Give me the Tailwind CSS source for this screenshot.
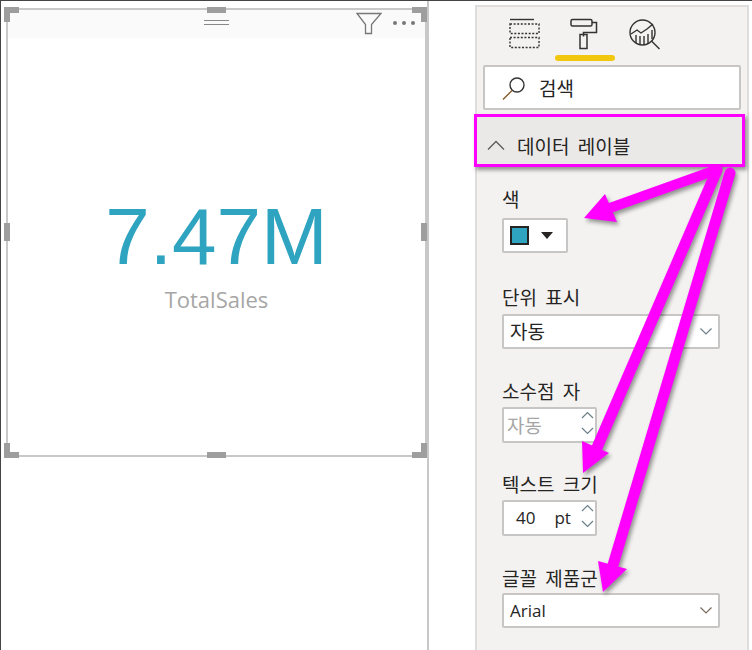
<!DOCTYPE html>
<html lang="ko">
<head>
    <meta charset="UTF-8">
    <script src="https://cdn.jsdelivr.net/npm/@tailwindcss/browser@4"></script>
    <title>Power BI card format</title>
</head>
<body class="bg-white">
    <div class="relative flex w-[752px] h-[650px] overflow-hidden border-t border-t-[#444] font-['Noto_Sans_CJK_KR',sans-serif] text-[#252423]">
        <!-- report canvas -->
        <div class="w-[429px] h-full border-l border-l-[#444] border-r-2 border-r-[#c8c8c8] pt-[7px] pl-[5px]">
            <div class="relative w-[421px] h-[449px] border-2 border-[#c8c8c8]">
                <div class="relative h-[28px] bg-[#fafafa]">
                    <div class="absolute left-[196px] top-[10px] w-[25px] h-[5px] border-y border-[#888]"></div>
                    <svg class="absolute left-[348px] top-[2px]" width="26" height="23" viewBox="0 0 26 23" fill="none" stroke="#777" stroke-width="1.3"><path d="M1 1.5h24l-9.5 11v9h-6v-9z"/></svg>
                    <div class="absolute left-[385px] top-[11px] flex gap-[5px]">
                        <span class="w-[4px] h-[4px] rounded-full bg-[#777]"></span>
                        <span class="w-[4px] h-[4px] rounded-full bg-[#777]"></span>
                        <span class="w-[4px] h-[4px] rounded-full bg-[#777]"></span>
                    </div>
                </div>
                <div class="flex flex-col items-center pt-[153px]">
                    <div class="h-[92px] leading-[92px] text-[80px] text-[#2ea4c0] font-['Liberation_Sans',sans-serif]">7.47M</div>
                    <div class="mt-[2px] text-[22px] leading-[28px] text-[#a6a6a6] font-['Open_Sans',sans-serif]">TotalSales</div>
                </div>
                <!-- resize handles -->
                <div class="absolute -left-[4px] -top-[3px] w-[15px] h-[6px] bg-[#9e9e9e]"></div>
                <div class="absolute -left-[4px] -top-[3px] w-[6px] h-[15px] bg-[#9e9e9e]"></div>
                <div class="absolute -right-[2px] -top-[3px] w-[15px] h-[6px] bg-[#9e9e9e]"></div>
                <div class="absolute -right-[2px] -top-[3px] w-[6px] h-[15px] bg-[#9e9e9e]"></div>
                <div class="absolute -left-[4px] -bottom-[3px] w-[15px] h-[6px] bg-[#9e9e9e]"></div>
                <div class="absolute -left-[4px] -bottom-[3px] w-[6px] h-[15px] bg-[#9e9e9e]"></div>
                <div class="absolute -right-[2px] -bottom-[3px] w-[15px] h-[6px] bg-[#9e9e9e]"></div>
                <div class="absolute -right-[2px] -bottom-[3px] w-[6px] h-[15px] bg-[#9e9e9e]"></div>
                <div class="absolute left-[199px] -top-[3px] w-[19px] h-[6px] bg-[#9e9e9e]"></div>
                <div class="absolute left-[199px] -bottom-[3px] w-[19px] h-[6px] bg-[#9e9e9e]"></div>
                <div class="absolute -left-[4px] top-[213px] w-[6px] h-[18px] bg-[#9e9e9e]"></div>
                <div class="absolute -right-[2px] top-[213px] w-[6px] h-[18px] bg-[#9e9e9e]"></div>
            </div>
        </div>

        <!-- format pane -->
        <div class="ml-[46px] mt-[4px] w-[274px] h-[646px] bg-[#f3f2f1] border-x-2 border-t-2 border-[#dedddc] text-[19px] [word-spacing:3px]">
            <div class="flex h-[48px] pt-[7px] pl-[31px]">
                <svg width="32" height="36" viewBox="0 0 32 36" fill="none" stroke="#333" stroke-width="1.4"><path d="M2 5.5h24"/><rect x="2" y="10" width="29" height="9.5" stroke-dasharray="2 1.6"/><rect x="2" y="23.5" width="29" height="10" stroke-dasharray="2 1.6"/></svg>
                <svg class="ml-[28px]" width="32" height="36" viewBox="0 0 32 36" fill="none" stroke="#333" stroke-width="1.5"><rect x="3" y="5.5" width="21" height="6.5" rx="1.5"/><path d="M24 8.5h4.5v10h-13v4"/><rect x="12" y="20.5" width="7" height="14"/></svg>
                <svg class="ml-[28px]" width="34" height="36" viewBox="0 0 34 36" fill="none" stroke="#333" stroke-width="1.4"><circle cx="14.5" cy="18.5" r="12.5"/><path d="M23.5 27l8 8"/><path d="M3 20l6-4 4 3 6-4 6-5"/><path d="M8 21v8M12 22v9M16 22v9M20 20v9M24 16v9"/></svg>
            </div>
            <div class="ml-[78px] w-[60px] h-[6px] rounded-full bg-[#f2c80f]"></div>
            <div class="mt-[4px] ml-[6px] w-[258px] h-[45px] flex items-center bg-white border-2 border-[#c8c6c4] rounded-[2px] pl-[16px]">
                <svg width="26" height="26" viewBox="0 0 26 26" fill="none" stroke="#333" stroke-width="1.4"><circle cx="16" cy="10" r="7"/><path d="M11 15.5L2 24.5" stroke="#8a5a2b"/></svg>
                <span class="ml-[12px] leading-none">검색</span>
            </div>
            <div class="mt-[6px] h-[50px] pt-[8px] flex items-center bg-[#ebe9e8] pl-[10px]">
                <svg width="18" height="10" viewBox="0 0 18 10" fill="none" stroke="#5f5a55" stroke-width="1.3"><path d="M1 9.5l8-8 8 8"/></svg>
                <span class="ml-[12px] leading-none">데이터 레이블</span>
            </div>
            <div class="pl-[25px]">
                <div class="mt-[20px] h-[25px] leading-[25px]">색</div>
                <div class="mt-[7px] w-[66px] h-[35px] flex items-center bg-white border-2 border-[#c8c6c4] rounded-[2px] pl-[6px]">
                    <span class="w-[19px] h-[19px] bg-[#2ea4c0] border-2 border-[#252423]"></span>
                    <svg class="ml-[12px]" width="12" height="7" viewBox="0 0 12 7" fill="#252423"><path d="M0 0h12L6 7z"/></svg>
                </div>
                <div class="mt-[31px] h-[25px] leading-[25px]">단위 표시</div>
                <div class="mt-[5px] w-[218px] h-[35px] flex items-center justify-between bg-white border-2 border-[#c8c6c4] rounded-[2px] pl-[6px] pr-[6px]">
                    <span>자동</span>
                    <svg width="12" height="7" viewBox="0 0 12 7" fill="none" stroke="#6b7f8a" stroke-width="1.2"><path d="M.5.5L6 6 11.5.5"/></svg>
                </div>
                <div class="mt-[29px] h-[25px] leading-[25px]">소수점 자</div>
                <div class="mt-[4px] relative w-[95px] h-[36px] flex items-center bg-white border-2 border-[#c8c6c4] rounded-[2px] pl-[3px] text-[#a6a6a6]">
                    <span>자동</span>
                    <svg class="absolute right-[1px] top-[1px]" width="13" height="30" viewBox="0 0 13 30" fill="none" stroke="#6b7f8a" stroke-width="1.2"><path d="M1 8l5.5-5.5L12 8M1 18l5.5 5.5L12 18"/></svg>
                </div>
                <div class="mt-[28px] h-[25px] leading-[25px]">텍스트 크기</div>
                <div class="mt-[4px] relative w-[95px] h-[36px] flex items-center bg-white border-2 border-[#c8c6c4] rounded-[2px] pl-[12px] text-[17px] font-['Open_Sans',sans-serif]">
                    <span>40</span><span class="ml-[19px]">pt</span>
                    <svg class="absolute right-[1px] top-[1px]" width="13" height="30" viewBox="0 0 13 30" fill="none" stroke="#6b7f8a" stroke-width="1.2"><path d="M1 8l5.5-5.5L12 8M1 18l5.5 5.5L12 18"/></svg>
                </div>
                <div class="mt-[29px] h-[25px] leading-[25px]">글꼴 제품군</div>
                <div class="mt-[3px] w-[218px] h-[35px] flex items-center justify-between bg-white border-2 border-[#c8c6c4] rounded-[2px] pl-[6px] pr-[6px] text-[17px] font-['Open_Sans',sans-serif]">
                    <span>Arial</span>
                    <svg width="12" height="7" viewBox="0 0 12 7" fill="none" stroke="#7a6a5a" stroke-width="1.2"><path d="M.5.5L6 6 11.5.5"/></svg>
                </div>
            </div>
        </div>

        <!-- callout annotations -->
        <div class="absolute left-[474px] top-[113px] w-[271px] h-[53px] border-[3px] border-[#ff00ff] shadow-[2px_3px_4px_rgba(0,0,0,0.4)]"></div>
        <svg class="absolute left-0 top-[-1px] drop-shadow-[2px_3px_2px_rgba(0,0,0,0.4)]" width="752" height="650" viewBox="0 0 752 650" fill="#ff00ff" stroke="#ff00ff" stroke-linecap="round">
            <path d="M716 170L610 208" stroke-width="10"/>
            <path d="M584 218L605 194 617 222z" stroke="none"/>
            <path d="M717 170L596 450" stroke-width="11"/>
            <path d="M583 473L582 441 609 453z" stroke="none"/>
            <path d="M730 173L613 565" stroke-width="11"/>
            <path d="M603 592L598 561 627 569z" stroke="none"/>
        </svg>
    </div>
</body>
</html>
